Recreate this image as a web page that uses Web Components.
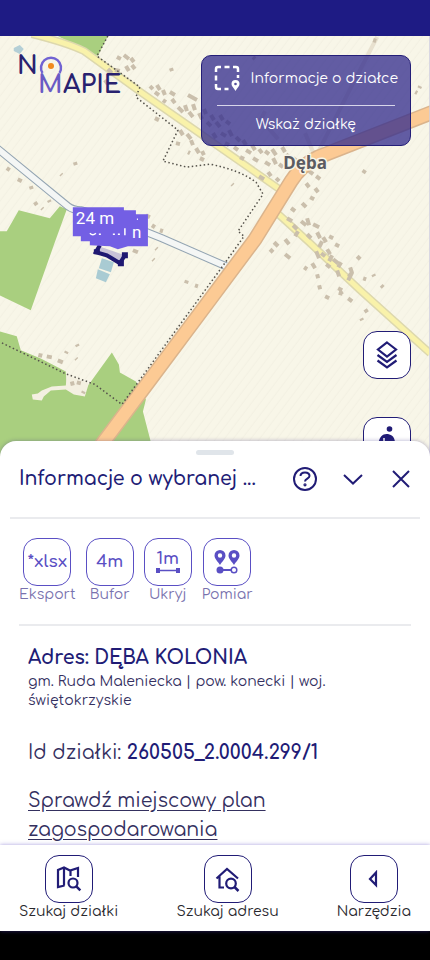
<!DOCTYPE html>
<html lang="pl">
<head>
<meta charset="utf-8">
<meta name="viewport" content="width=device-width, initial-scale=1">
<title>Na Mapie</title>
<style>
	html, body {
		height: 100%;
		margin: 0;
	}

	body {
		--navy: #211c76;
		--violet: #5a4fc4;
		--line: #eaebee;
		background: #000;
		color: var(--navy);
		font-family: Comfortaa, Lato, 'Open Sans', sans-serif;
	}
</style>
</head>
<body>
<map-app>
	<map-view slot="map">
		<app-logo slot="logo"></app-logo>
		<plot-card slot="card" heading="Informacje o działce">Wskaż działkę</plot-card>
		<icon-button slot="controls" icon="layers" name="Warstwy"></icon-button>
		<icon-button slot="controls" icon="person" name="Widok ulicy"></icon-button>
	</map-view>
	<info-sheet slot="sheet" heading="Informacje o wybranej ...">
		<icon-button slot="tools" tone="violet" text="*xlsx">Eksport</icon-button>
		<icon-button slot="tools" tone="violet" text="4m">Bufor</icon-button>
		<icon-button slot="tools" tone="violet" icon="ruler" text="1m">Ukryj</icon-button>
		<icon-button slot="tools" tone="violet" icon="measure">Pomiar</icon-button>
		<plot-details></plot-details>
	</info-sheet>
	<bottom-nav slot="nav">
		<icon-button tone="nav" icon="map">Szukaj działki</icon-button>
		<icon-button tone="nav" icon="home">Szukaj adresu</icon-button>
		<icon-button tone="nav" icon="back">Narzędzia</icon-button>
	</bottom-nav>
</map-app>

<script>
const icons = {
	layers: `
		<svg width="24" height="30" viewBox="0 0 24 30" fill="none" stroke="currentColor" stroke-width="2.200">
			<path d="M12 2.5 21 9.5 12 16.5 3 9.5z"/>
			<path d="M2.500 15 12 22l9.500-7M2.500 20.500 12 27.500l9.500-7"/>
		</svg>`,
	person: `
		<svg width="28" height="30" viewBox="0 0 28 30" fill="currentColor">
			<circle cx="16.500" cy="3" r="2.800"/>
			<path d="M5.500 17c1-6 4-9 8-9s8 2 8.500 8l-4 1v5l3 7h-3l-4-7-4 7h-3l3-9v-4z"/>
			<path d="M11 12v4" stroke="#fff" stroke-width="1.500"/>
		</svg>`,
	measure: `
		<svg width="26" height="28" viewBox="0 0 26 28" fill="currentColor">
			<path fill-rule="evenodd" d="M6 2a5.500 5.500 0 0 1 5.500 5.500C11.500 11 8 13.500 6 17 4 13.500.500 11 .500 7.500A5.500 5.500 0 0 1 6 2zm0 3.300a2.200 2.200 0 1 0 0 4.400 2.200 2.200 0 0 0 0-4.400z"/>
			<path fill-rule="evenodd" d="M20 2a5.500 5.500 0 0 1 5.500 5.500c0 3.500-3.500 6-5.500 9.500-2-3.500-5.500-6-5.500-9.500A5.500 5.500 0 0 1 20 2zm0 3.300a2.200 2.200 0 1 0 0 4.400 2.200 2.200 0 0 0 0-4.400z"/>
			<circle cx="6" cy="22" r="3.500"/>
			<path d="M8 22h9" stroke="currentColor" stroke-width="2"/>
			<circle cx="20" cy="22" r="2.800" fill="none" stroke="currentColor" stroke-width="1.500"/>
		</svg>`,
	ruler: `
		<svg width="26" height="5" viewBox="0 0 26 5" fill="currentColor">
			<path d="M1 0h4v5H1zM21 0h4v5h-4zM4 1.800h18v1.400H4z"/>
		</svg>`,
	map: `
		<svg width="26" height="28" viewBox="0 0 26 28" fill="none" stroke="currentColor" stroke-width="2.200">
			<path d="M8.500 20.500 2 22V5l6-2.500 6 3L22 3v9M8 2.500v18M14.500 5.500V11"/>
			<circle cx="17" cy="18" r="4.500"/>
			<path d="m20.300 21.300 4 4" stroke-width="2.500"/>
		</svg>`,
	home: `
		<svg width="26" height="28" viewBox="0 0 26 28" fill="none" stroke="currentColor" stroke-width="2.200">
			<path d="M1.500 13.500 12 4l11 9.500M4.500 11.500V22.500H9"/>
			<circle cx="16" cy="18.500" r="4.800"/>
			<path d="m19.500 22 4 4" stroke-width="2.500"/>
		</svg>`,
	back: `
		<svg width="18" height="18" viewBox="0 0 18 18" fill="none" stroke="currentColor" stroke-width="2.200">
			<path d="M11 2.500v12.500L5 9z"/>
		</svg>`,
	select: `
		<svg width="28" height="28" viewBox="0 0 28 28" fill="none" stroke="#fff" stroke-width="2.500">
			<path d="M2 7V4q0-2 2-2h3M10.500 2h5M19 2h3q2 0 2 2v3M2 10.500v5M2 19v3q0 2 2 2h3M10.500 24h4M24 10v3"/>
			<path d="M21.500 15a4 4 0 0 1 4 4c0 2.500-2.500 4-4 7-1.500-3-4-4.500-4-7a4 4 0 0 1 4-4z" fill="#fff" stroke="none"/>
			<circle cx="21.500" cy="19" r="1.300" fill="#57519d" stroke="none"/>
		</svg>`,
	help: `
		<svg width="26" height="26" viewBox="0 0 26 26" fill="none" stroke="currentColor" stroke-width="2">
			<circle cx="13" cy="13" r="11"/>
			<path d="M8.500 10c0-2 1.800-3.500 4.500-3.500s4.500 1.300 4.500 3.500c0 2.600-4.500 2.600-4.500 5.500"/>
			<circle cx="13" cy="18.800" r=".600"/>
		</svg>`,
	collapse: `
		<svg width="26" height="26" viewBox="0 0 26 26" fill="none" stroke="currentColor" stroke-width="2">
			<path d="m4 9 9 8.500L22 9"/>
		</svg>`,
	close: `
		<svg width="26" height="26" viewBox="0 0 26 26" fill="none" stroke="currentColor" stroke-width="2">
			<path d="m5 5 16 16M21 5 5 21"/>
		</svg>`
};

// each group is "x y dx dy" for one small building
const buildings = `
	117 57 4 2,124 55 5 4,131 58 3 4,108 69 4 4,115 70 5 1,126 66 3 5,132 65 3 4,
	105 80 3 4,150 86 3 3,157 85 3 5,155 92 4 3,163 90 2 5,170 92 5 3,172 99 3 4,
	163 100 3 2,178 107 5 5,185 105 2 6,189 112 4 5,188 95 9 5,193 104 2 6,
	180 130 3 5,187 134 4 5,176 143 4 1,191 140 2 5,188 152 2 1,196 148 3 5,
	202 151 2 4,200 158 4 2,155 118 4 2,75 162 1 3,61 174 1 1,7 168 3 2,
	18 179 4 2,31 186 1 3,35 202 2 3,49 200 1 2,42 208 1 1,
	199 113 3 6,204 109 2 5,211 115 3 5,207 122 4 4,216 122 4 5,220 115 3 5,
	226 121 4 3,213 133 3 5,221 133 5 3,229 130 3 6,236 137 4 4,243 140 3 5,
	225 143 4 2,234 147 4 3,246 150 5 3,252 145 3 5,259 149 3 4,265 151 4 3,
	240 157 4 2,253 158 5 3,265 162 5 3,273 158 3 6,279 164 4 3,268 172 3 4,
	276 178 3 3,259 176 5 3,286 154 4 4,293 158 4 3,272 149 4 6,282 147 3 5,
	309 171 4 3,316 176 4 3,306 183 3 4,315 188 3 4,310 197 4 2,302 203 4 4,
	291 208 4 3,287 218 5 3,293 225 4 4,301 221 5 4,307 218 2 7,313 224 6 3,
	307 234 4 4,317 232 3 6,323 237 3 5,329 236 4 2,335 244 4 2,327 249 3 5,
	321 253 4 3,316 251 3 7,326 264 4 3,312 263 3 5,333 259 5 4,337 270 2 6,
	348 274 3 2,357 256 3 3,373 274 1 2,381 285 2 2,363 278 3 1,350 267 2 6,
	319 285 1 4,325 296 4 2,338 288 4 2,348 298 4 3,340 291 2 3,365 309 2 3,
	361 318 1 2,304 267 3 2,317 274 1 4,285 254 5 4,274 242 4 4,270 249 3 3,
	322 241 -3 6,332 255 -3 6,341 262 -3 5,298 231 -3 5,352 272 -4 8,
	341 291 -1 4,365 170 -2 3,232 184 1 1,420 86 -1 2,415 92 2 1,
	171 68 1 3,146 215 4 2,152 225 3 2,160 230 3 1,156 248 1 1,153 259 1 1,
	133 250 5 2,187 280 -1 3,195 285 3 1,77 344 1 2,67 351 -1 2,76 358 1 1,
	41 353 -1 4,47 356 5 1,58 360 5 2,72 381 1 4,77 382 4 1,84 391 -1 2,
	253 57 2 2,373 40 3 1,285 239 4 5
`.trim().split(',').map(b => {
	const [x, y, dx, dy] = b.trim().split(' ');
	return `M${x} ${y}l${dx} ${dy}`;
}).join('');

class MapApp extends HTMLElement {
	constructor() {
		super();
		this.attachShadow({ mode: 'open' }).innerHTML = `
			<style>
				:host {
					background: #000;
					box-sizing: border-box;
					display: grid;
					grid-template-rows: 36px minmax(0, 1fr) minmax(0, 1fr) auto;
					height: 100vh;
					padding-bottom: 29px;
				}

				.status {
					background: #1e1b84;
				}

				::slotted([slot="map"]) {
					margin-bottom: -16px;
				}

				::slotted([slot="sheet"]),
				::slotted([slot="nav"]) {
					z-index: 1;
				}
			</style>
			<div class="status"></div>
			<slot name="map"></slot>
			<slot name="sheet"></slot>
			<slot name="nav"></slot>
		`;
	}
}

class MapView extends HTMLElement {
	constructor() {
		super();
		this.attachShadow({ mode: 'open' }).innerHTML = `
			<style>
				:host {
					background: #f7f5e6;
					display: grid;
					grid-template: minmax(0, 1fr) / minmax(0, 1fr);
					overflow: hidden;
				}

				.canvas, .overlay {
					grid-area: 1 / 1;
				}

				.canvas {
					height: 100%;
					width: 100%;
				}

				.overlay {
					align-items: flex-start;
					display: flex;
					justify-content: space-between;
					padding: 19px;
				}

				.side {
					align-items: flex-end;
					display: flex;
					flex-direction: column;
					gap: 38px;
				}

				.side slot[name="card"] {
					display: block;
					margin-bottom: 147px;
				}
			</style>
			${this.drawing()}
			<div class="overlay">
				<slot name="logo"></slot>
				<div class="side">
					<slot name="card"></slot>
					<slot name="controls"></slot>
				</div>
			</div>
		`;
	}

	drawing() {
		return `
			<svg class="canvas" viewBox="0 36 430 420" preserveAspectRatio="xMidYMin slice" fill="none" aria-label="Mapa">
				<defs>
					<pattern id="field" width="7" height="7" patternUnits="userSpaceOnUse" patternTransform="rotate(37)">
						<path d="M2 0v7" stroke="#efedde" stroke-width="1"/>
					</pattern>
				</defs>
				<path d="M0 36h430v420H0z" fill="#f8f6e8"/>
				<path d="M0 36h430v420H0z" fill="url(#field)" opacity=".6"/>
				<g fill="#a9cf7f">
					<path d="M58 36h50l-10 20-17-8z"/>
					<path d="M0 231h7l12-21 31 8 10-12 7 3-12 33-24 68-31-15z"/>
					<path d="M0 331l17 5 4 14 20 8 25 13 1 13h22l23-32 7 12 1 8 16 9 10 18-3 12 14 54H0z"/>
				</g>
				<path d="M67 374l22 9-4 13-11-2-8-5-15 1-7 6-2 4-9-1-1-5 6-1 4-3 10-4 14-1z" fill="#f4f0e1"/>
				<path d="m14 48 6-3 4 4-4 5-6-3z" fill="#b4cfd6"/>
				<g fill="#a9cbd3">
					<path d="m102 258 12 4-3 10-12-4z"/>
					<path d="m98 269 12 5-4 8-10-4z"/>
				</g>
				<path d="m315 157-10-24M318 152l33-65 26-50M265 111l-4 8 17 20" stroke="#e8e1cf" stroke-width="4"/>
				<path d="M32 34q36 9 52 17l58 42 56 39 90 63M275 211l34 31 50 47 71 64" stroke="#ddd8ad" stroke-width="8"/>
				<path d="M32 34q36 9 52 17l58 42 56 39 90 63M275 211l34 31 50 47 71 64" stroke="#f9f2aa" stroke-width="5"/>
				<path d="${buildings}" stroke="#cabfac" stroke-width="4"/>
				<path d="M-4 147 68 206q5 4 13 4 42 12 81 28l64 28" stroke="#93a4b2" stroke-width="8"/>
				<path d="M-4 147 68 206q5 4 13 4 42 12 81 28l64 28" stroke="#f4f6f5" stroke-width="6"/>
				<path d="M438 110 318 157q-17 8-27 24l-36 58-44 59-62 83-54 72" stroke="#dbb48c" stroke-width="15"/>
				<path d="M438 110 318 157q-17 8-27 24l-36 58-44 59-62 83-54 72" stroke="#fcca94" stroke-width="12"/>
				<path d="M108 36 97 56l43 31-4 10 42 33-15 31 24 6 23-3q30 6 46 18l7 12-25 37 6 5-20 28-102 140-27-20-30-11-66-32" stroke="#55524b" stroke-width="1.500" stroke-dasharray="1.500 2.500"/>
				<path d="m99 246 26 9-3 10-27-13z" fill="#c9c2d7"/>
				<path d="m100 245-4 7 11 3 13 8 5-8" stroke="#1f1871" stroke-width="4"/>
				<path d="M94 249h6v5h-6zM118 260h6v6h-6zM122 252h6v6h-6z" fill="#1f1871"/>
				<path d="M73 207h51v3h12v4h12v32h-20l-10 3-8-3-20-1v-4h-9v-5h-8z" fill="#735fe4"/>
				<g fill="#fff" font-family="Roboto, sans-serif" font-size="17">
					<text x="76" y="224">24 m</text>
					<text x="132" y="238">n</text>
				</g>
				<path d="M90 233q3 3 6 0M99 234h2M113 234h2M118 234h2M125 228v7M137 219h1" stroke="#fff" stroke-width="1.500"/>
				<text x="305" y="169" text-anchor="middle" font-family="'Noto Sans', 'Open Sans', sans-serif" font-size="17" font-weight="700" fill="#5c5c62" stroke="#f8f5e7" stroke-width="3" paint-order="stroke">Dęba</text>
				<path d="M429.500 36v420" stroke="#cfcde0"/>
			</svg>`;
	}
}

class AppLogo extends HTMLElement {
	constructor() {
		super();
		this.attachShadow({ mode: 'open' }).innerHTML = `
			<style>
				:host {
					display: block;
				}

				svg {
					display: block;
					overflow: visible;
				}
			</style>
			<svg width="110" height="50" viewBox="0 0 110 50" role="img" aria-label="Na mapie">
				<g font-family="Comfortaa, Lato, sans-serif" font-size="25" font-weight="700" fill="#29226f">
					<text x="-2" y="19">N</text>
					<text x="19" y="38" fill="#6a5bc4">M</text>
					<text x="44" y="38">APIE</text>
				</g>
				<path d="M23.500 18a10 10 0 1 1 17 0" fill="none" stroke="#7163d2" stroke-width="2.500"/>
				<circle cx="32" cy="11" r="3" fill="#f08a1c"/>
			</svg>
		`;
	}
}

class PlotCard extends HTMLElement {
	constructor() {
		super();
		this.attachShadow({ mode: 'open' }).innerHTML = `
			<style>
				:host {
					background: rgba(50, 44, 140, .76);
					border: 1px solid #241e78;
					border-radius: 10px;
					box-sizing: border-box;
					color: #fff;
					display: block;
					font-size: 14px;
					line-height: 20px;
					padding: 9px 12px 10px;
				}

				.heading {
					align-items: center;
					display: flex;
					gap: 9px;
					height: 28px;
				}

				.hint {
					border-top: 1px solid #d8d6ea;
					margin: 12px 3px 0;
					padding-top: 9px;
					text-align: center;
				}
			</style>
			<div class="heading">${icons.select}<span>${this.getAttribute('heading')}</span></div>
			<div class="hint"><slot></slot></div>
		`;
	}
}

class IconButton extends HTMLElement {
	constructor() {
		super();
		const name = this.getAttribute('name');
		const text = this.getAttribute('text') || '';
		const icon = icons[this.getAttribute('icon')] || '';
		this.attachShadow({ mode: 'open' }).innerHTML = `
			<style>
				:host {
					color: var(--navy);
					display: block;
				}

				:host([tone="violet"]) {
					color: var(--violet);
				}

				button {
					align-items: center;
					background: none;
					border: 0;
					color: inherit;
					cursor: pointer;
					display: flex;
					flex-direction: column;
					font: inherit;
					font-size: 14px;
					line-height: 18px;
					padding: 0;
				}

				.box {
					align-items: center;
					background: #fff;
					border: 1px solid currentColor;
					border-radius: 14px;
					box-sizing: border-box;
					display: flex;
					flex-direction: column;
					font-size: 17px;
					font-weight: 600;
					height: 48px;
					justify-content: center;
					width: 48px;
				}

				.label {
					white-space: nowrap;
				}

				:host([tone="violet"]) .label {
					color: #7972ae;
				}

				:host([tone="nav"]) .label {
					color: #28272d;
				}
			</style>
			<button type="button" ${name ? `aria-label="${name}"` : ''}>
				<span class="box">${text}${icon}</span>
				<span class="label"><slot></slot></span>
			</button>
		`;
	}
}

class InfoSheet extends HTMLElement {
	constructor() {
		super();
		this.attachShadow({ mode: 'open' }).innerHTML = `
			<style>
				:host {
					background: #fff;
					border-radius: 16px 16px 0 0;
					box-shadow: 0 0 4px rgba(60, 50, 130, .4);
					display: flex;
					flex-direction: column;
					overflow: hidden;
				}

				.handle {
					align-self: center;
					background: #e0e5ea;
					border-radius: 3px;
					flex: none;
					height: 5px;
					margin-top: 9px;
					width: 38px;
				}

				header {
					align-items: center;
					border-bottom: 2px solid var(--line);
					display: flex;
					flex: none;
					justify-content: space-between;
					margin: 0 10px;
					padding: 11px 6px 25px 9px;
				}

				h2 {
					font-size: 19px;
					font-weight: 600;
					line-height: 26px;
					margin: 0;
					white-space: nowrap;
				}

				.actions {
					display: flex;
					gap: 22px;
				}

				.actions button {
					background: none;
					border: 0;
					color: inherit;
					cursor: pointer;
					display: flex;
					padding: 0;
				}

				.body {
					flex: 1;
					min-height: 0;
					overflow: hidden;
					padding: 0 19px;
				}

				.tools {
					border-bottom: 2px solid var(--line);
					display: flex;
					gap: 10px;
					padding: 19px 0 20px;
				}
			</style>
			<div class="handle"></div>
			<header>
				<h2>${this.getAttribute('heading')}</h2>
				<div class="actions">
					<button type="button" aria-label="Pomoc">${icons.help}</button>
					<button type="button" aria-label="Zwiń">${icons.collapse}</button>
					<button type="button" aria-label="Zamknij">${icons.close}</button>
				</div>
			</header>
			<div class="body">
				<div class="tools"><slot name="tools"></slot></div>
				<slot></slot>
			</div>
		`;
	}
}

class PlotDetails extends HTMLElement {
	constructor() {
		super();
		this.attachShadow({ mode: 'open' }).innerHTML = `
			<style>
				:host {
					color: #34305f;
					display: block;
					font-size: 19px;
					line-height: 29px;
					padding: 17px 9px 0;
				}

				h3 {
					color: var(--navy);
					font-size: 19px;
					font-weight: 700;
					line-height: 29px;
					margin: 0;
				}

				p {
					margin: 0 0 19px;
				}

				.region {
					font-size: 14px;
					line-height: 19px;
					margin-bottom: 28px;
					max-width: 330px;
				}

				b {
					color: var(--navy);
				}

				a {
					color: inherit;
					display: block;
					max-width: 260px;
					text-underline-offset: 3px;
				}
			</style>
			<h3>Adres: DĘBA KOLONIA</h3>
			<p class="region">gm. Ruda Maleniecka | pow. konecki | woj. świętokrzyskie</p>
			<p>Id działki: <b>260505_2.0004.299/1</b></p>
			<a href="#plan">Sprawdź miejscowy plan zagospodarowania</a>
		`;
	}
}

class BottomNav extends HTMLElement {
	constructor() {
		super();
		this.attachShadow({ mode: 'open' }).innerHTML = `
			<style>
				:host {
					background: #fff;
					box-shadow: 0 0 4px rgba(80, 60, 190, .5);
					display: block;
				}

				nav {
					display: flex;
					justify-content: space-between;
					padding: 10px 19px;
				}
			</style>
			<nav><slot></slot></nav>
		`;
	}
}

customElements.define('map-app', MapApp);
customElements.define('map-view', MapView);
customElements.define('app-logo', AppLogo);
customElements.define('plot-card', PlotCard);
customElements.define('icon-button', IconButton);
customElements.define('info-sheet', InfoSheet);
customElements.define('plot-details', PlotDetails);
customElements.define('bottom-nav', BottomNav);
</script>
</body>
</html>
